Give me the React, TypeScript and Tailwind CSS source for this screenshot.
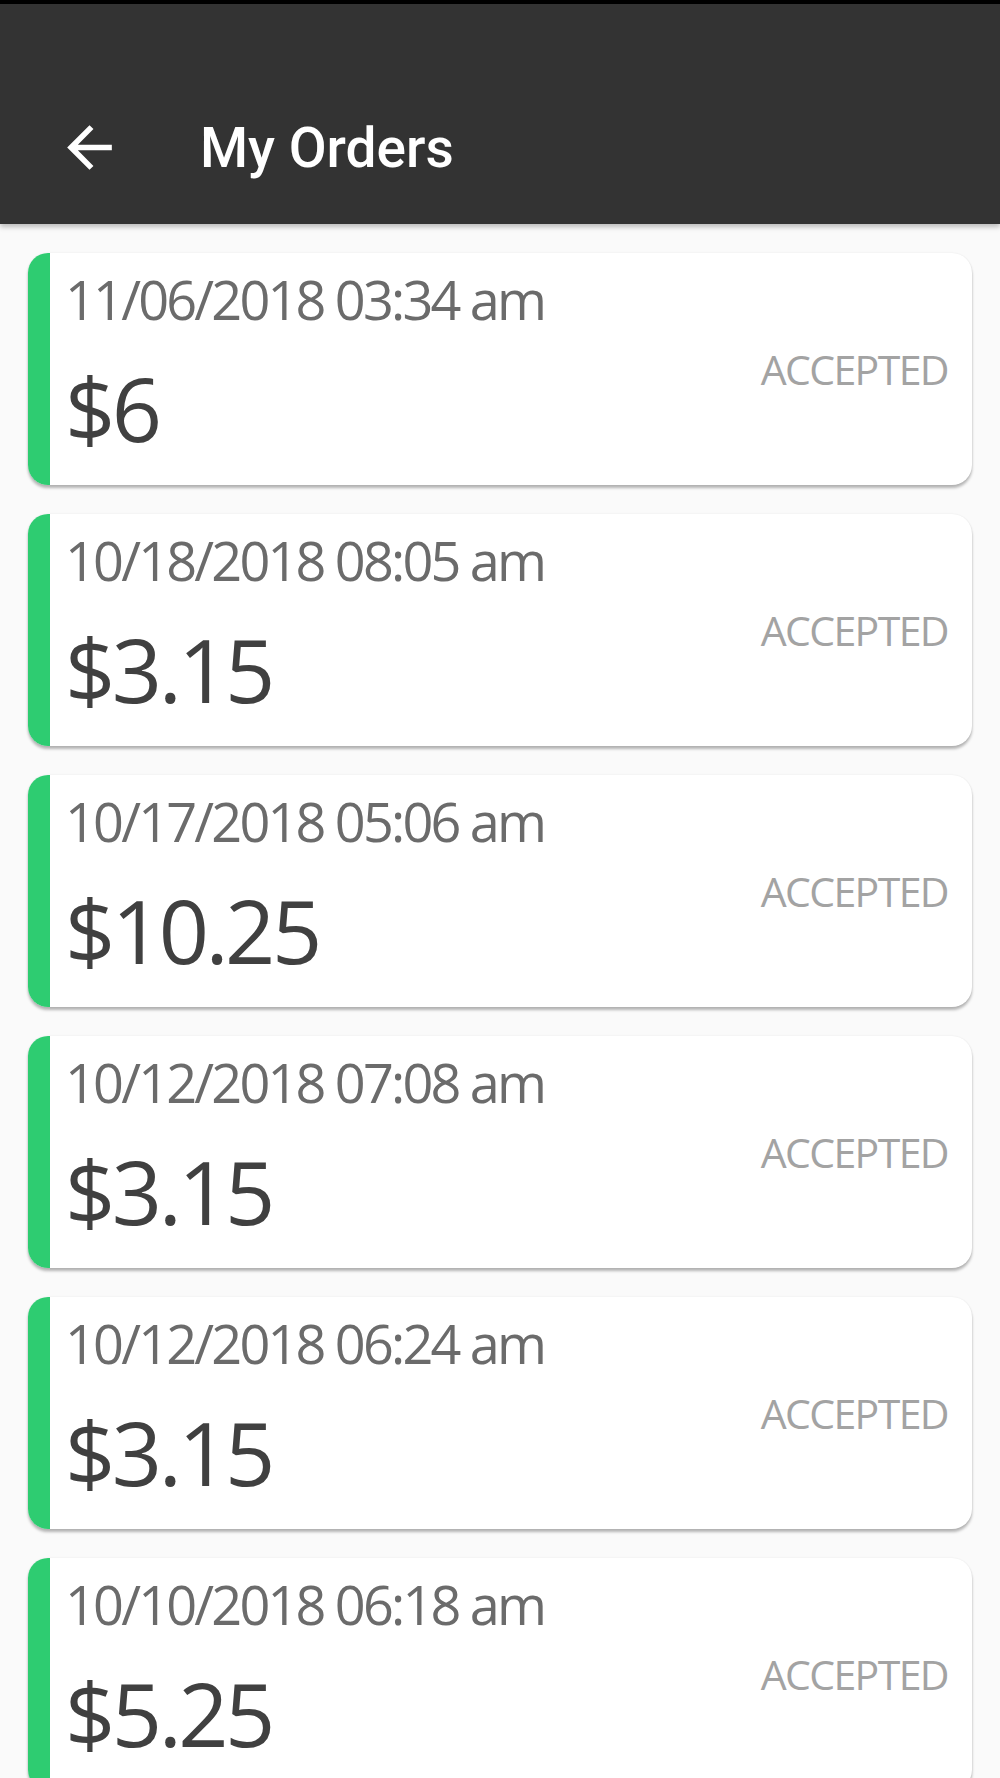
import React from 'react';

const orders = [
    { date: '11/06/2018 03:34 am', amount: '$6' },
    { date: '10/18/2018 08:05 am', amount: '$3.15' },
    { date: '10/17/2018 05:06 am', amount: '$10.25' },
    { date: '10/12/2018 07:08 am', amount: '$3.15' },
    { date: '10/12/2018 06:24 am', amount: '$3.15' },
    { date: '10/10/2018 06:18 am', amount: '$5.25' },
];

const OrderCard: React.FC<{ date: string; amount: string }> = ({ date, amount }) => (
    <div className="flex h-[232px] flex-none overflow-hidden rounded-[20px] bg-white shadow-[0_3px_3px_rgba(0,0,0,0.28),0_0_2px_rgba(0,0,0,0.08)]">
        <div className="w-[22px] flex-none bg-[#2ecc71]" />
        <div className="flex flex-1 items-center justify-between pl-[15px] pr-[24px]">
            <div className="flex h-full flex-col pt-[19px]" style={{ fontFamily: '"Open Sans", sans-serif' }}>
                <div className="text-[54px] font-medium leading-[54px] tracking-[-2.8px] text-[#6b6b6b]">{date}</div>
                <div className="mt-[38px] text-[88px] leading-[88px] tracking-[-3.5px] text-[#404040]">{amount}</div>
            </div>
            <div
                className="text-[41px] font-medium leading-[40px] tracking-[-1.6px] text-[#a3a3a3]"
                style={{ fontFamily: '"Open Sans", sans-serif' }}
            >
                ACCEPTED
            </div>
        </div>
    </div>
);

export default function App() {
    return (
        <div className="flex h-[1778px] w-[1000px] flex-col overflow-hidden bg-[#fafafa]">
            <div className="h-[4px] flex-none bg-black" />
            <div className="relative z-10 flex h-[220px] flex-none items-start bg-[#333333] pt-[110px] shadow-[0_3px_5px_rgba(0,0,0,0.25)]">
                <svg className="ml-[56px] h-[67px] w-[67px] flex-none" viewBox="0 0 24 24" fill="white">
                    <path d="M20 11H7.83l5.59-5.59L12 4l-8 8 8 8 1.41-1.41L7.83 13H20v-2z" />
                </svg>
                <div
                    className="ml-[77px] mt-[6px] text-[55px] font-medium leading-[56px] text-white"
                    style={{ fontFamily: 'Roboto, sans-serif' }}
                >
                    My Orders
                </div>
            </div>
            <div className="flex flex-col gap-[29px] px-[28px] pt-[29px]">
                {orders.map((o, i) => (
                    <OrderCard key={i} date={o.date} amount={o.amount} />
                ))}
            </div>
        </div>
    );
}
